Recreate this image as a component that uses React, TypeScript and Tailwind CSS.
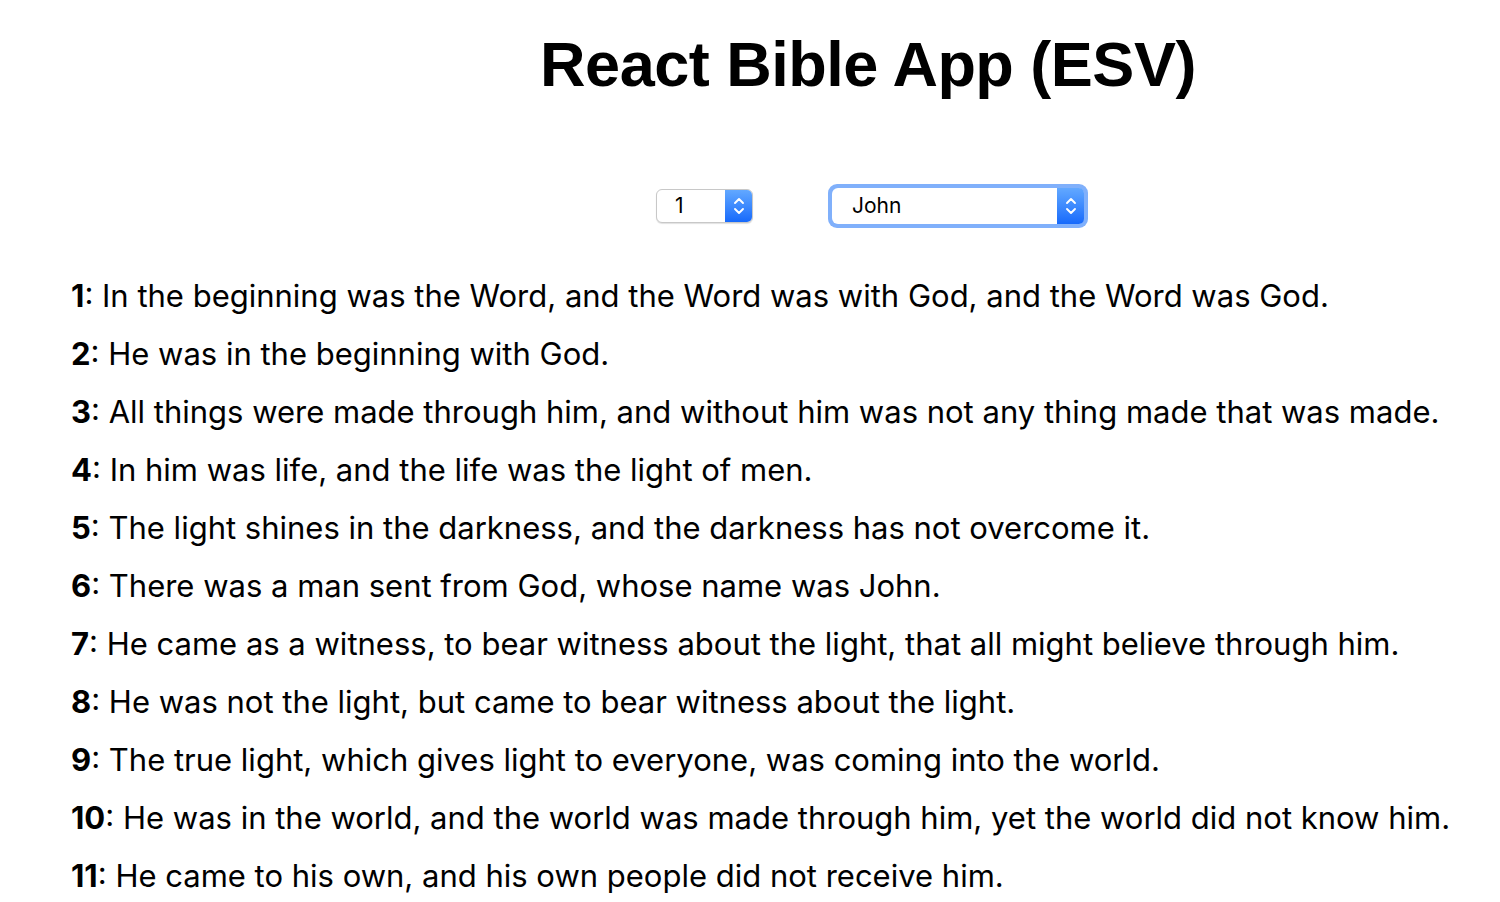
import React from 'react';

const verses: string[] = [
  'In the beginning was the Word, and the Word was with God, and the Word was God.',
  'He was in the beginning with God.',
  'All things were made through him, and without him was not any thing made that was made.',
  'In him was life, and the life was the light of men.',
  'The light shines in the darkness, and the darkness has not overcome it.',
  'There was a man sent from God, whose name was John.',
  'He came as a witness, to bear witness about the light, that all might believe through him.',
  'He was not the light, but came to bear witness about the light.',
  'The true light, which gives light to everyone, was coming into the world.',
  'He was in the world, and the world was made through him, yet the world did not know him.',
  'He came to his own, and his own people did not receive him.',
];

function Stepper() {
  return (
    <div className="w-[27px] self-stretch flex items-center justify-center rounded-r-[5px] bg-gradient-to-b from-[#62a8ff] to-[#1669fb]">
      <svg width="12" height="20" viewBox="0 0 12 20" fill="none" stroke="white" strokeWidth="1.9" strokeLinecap="round" strokeLinejoin="round">
        <path d="M2 7 L6 3 L10 7" />
        <path d="M2 13 L6 17 L10 13" />
      </svg>
    </div>
  );
}

export default function App() {
  return (
    <div className="min-h-[902px] bg-white text-black overflow-hidden" style={{ fontFamily: 'Inter, "Noto Sans", sans-serif' }}>
      <header className="pl-[236px] pt-[30px]">
        <h1 className="text-center text-[63px] font-bold leading-[68px] tracking-[-0.5px]" style={{ fontFamily: '"Liberation Sans", Arial, sans-serif' }}>
          React Bible App (ESV)
        </h1>
      </header>

      <div className="flex items-center pl-[656px] mt-[86px]">
        <div className="flex w-[97px] h-[34px] bg-white border border-[#c8c8c8] rounded-[6px] shadow-[0_1px_1px_rgba(0,0,0,0.12)]">
          <span className="flex-1 flex items-center pl-[18px] text-[21px]">1</span>
          <Stepper />
        </div>
        <div className="ml-[75px] p-[4px] rounded-[9px] bg-[#80b0fb]">
          <div className="flex w-[252px] h-[36px] bg-white rounded-[6px]">
            <span className="flex-1 flex items-center pl-[20px] text-[21px]">John</span>
            <Stepper />
          </div>
        </div>
      </div>

      <ol className="pl-[71px] mt-[39px]">
        {verses.map((v, i) => (
          <li key={i} className="text-[31px] leading-[58px] whitespace-nowrap">
            <span className="font-bold">{i + 1}</span>: {v}
          </li>
        ))}
      </ol>
    </div>
  );
}
